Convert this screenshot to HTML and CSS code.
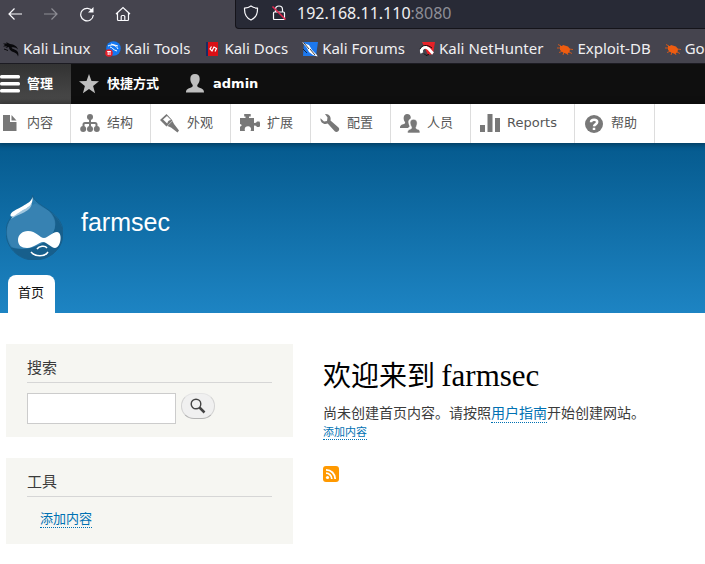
FILE: index.html
```html
<!DOCTYPE html>
<html lang="zh-CN">
<head>
<meta charset="utf-8">
<title>欢迎来到 farmsec</title>
<link rel="stylesheet" href="styles.css">
</head>
<body>
<div class="browser">
  <div class="nav">
    <button class="nav-btn" aria-label="Back"><svg viewBox="0 0 16 16"><path d="M15 8H2M7.500 2.500 2 8l5.500 5.500"/></svg></button>
    <button class="nav-btn off" aria-label="Forward"><svg viewBox="0 0 16 16"><path d="M1 8h13M8.500 2.500 14 8l-5.500 5.500"/></svg></button>
    <button class="nav-btn" aria-label="Reload"><svg viewBox="0 0 16 16"><path d="M13.500 5.500A6.300 6.300 0 1 0 14.300 9"/><path d="M14.500 1v5.500H9z" fill="#fbfbfe" stroke="none"/></svg></button>
    <button class="nav-btn" aria-label="Home"><svg viewBox="0 0 16 16"><path d="M1 8 8 1.500 15 8M2.500 7v6.500q0 1 1 1h9q1 0 1-1V7M6.200 14.500v-4q0-1 1-1h1.600q1 0 1 1v4"/></svg></button>
    <div class="url">
      <svg viewBox="0 0 16 16"><path d="M8 1c2 1.500 4 2 6.500 2.200C14.700 9 12.500 13 8 15 3.500 13 1.300 9 1.500 3.200 4 3 6 2.500 8 1z"/></svg>
      <svg viewBox="0 0 16 16"><path d="M4.500 7V4.500a3.500 3.500 0 0 1 7 0V7M3.500 7h9q1 0 1 1v5.500q0 1-1 1h-9q-1 0-1-1V8q0-1 1-1z"/><path d="m1.500 1.500 13 13" stroke="#e22850" stroke-width="1.600"/></svg>
      <span class="address">192.168.11.110<span class="port">:8080</span></span>
    </div>
  </div>
  <nav class="bookmarks">
    <a href="#"><svg viewBox="0 0 16 16"><path d="M0 2.500h4L3 1l4 2c4 .5 7 2 8 5.500-2-2-4-2.500-6.500-2 1 2 5 1.500 6.500 5 .5 1.500.5 3 0 4-.5-2.500-2-3.500-4-4.300-3-1-5-2.200-5-5.200L2.500 7 4 5.200 0 5.500l2-1.500z" fill="#08080b"/><path d="m1 8 4 1.500" stroke="#08080b"/></svg>Kali Linux</a>
    <a href="#"><svg viewBox="0 0 16 16"><circle cx="8.500" cy="7.500" r="7.300" fill="#1478f0"/><path d="M3 5c4-2 8-1 10 3M6 3l7 2M5 6c2 0 3 3 7 4" stroke="#fff" fill="none"/><circle cx="4" cy="12" r="3.800" fill="#e5202c"/><path d="M2.200 10.500h3.600M3.200 10.500v3.500M5 10.500v3.500" stroke="#fff" fill="none"/></svg>Kali Tools</a>
    <a href="#"><svg viewBox="0 0 16 16"><path d="M2 1h2v14H2z" fill="#172c65"/><path d="M4 1h10v14H4z" fill="#da1016"/><path d="M7.500 5.500 6 8l2 2 2-4 2.500 1.500-1.500 3" stroke="#fff" fill="none" stroke-width="1.200"/></svg>Kali Docs</a>
    <a href="#"><svg viewBox="0 0 16 16"><path d="M2 1h14l-2 14H1z" fill="#1d78ed"/><path d="m0 1 4 2 3 1 3 5 5 5 .5 1.500L11 14l-4-3-2-4z" fill="#fff"/><path d="m2 2 5 6M8 8l5 6M1 8l4 4" stroke="#111" stroke-width=".8" fill="none"/></svg>Kali Forums</a>
    <a href="#"><svg viewBox="0 0 16 16"><path d="M3 1h13l-2 12-5 1z" fill="#e62127"/><path d="M3 12c-2-4 2-7 5.500-5 2.500 1.500 3.500 4 5.500 5.500" stroke="#fff" stroke-width="3" fill="none"/><path d="M1 8c2-4 7-5 12-1M5 12.500l2 2 3-1" stroke="#111" fill="none"/></svg>Kali NetHunter</a>
    <a href="#"><svg viewBox="0 0 16 16"><path d="M3 5h2l1-1 5 1.500 2 2.500-.5 3-2.500 2-4-1.500L3 9z" fill="#ee5c10"/><path d="M1 3.500 4 5M0 7h4M2 11.500 6 10M6 14l1-3M12 8l4 .5M12 11l3 1.500M10 12l1 2" stroke="#ee5c10" stroke-width=".8"/></svg>Exploit-DB</a>
    <a href="#"><svg viewBox="0 0 16 16"><path d="M3 5h2l1-1 5 1.500 2 2.500-.5 3-2.500 2-4-1.500L3 9z" fill="#ee5c10"/><path d="M1 3.500 4 5M0 7h4M2 11.500 6 10M6 14l1-3M12 8l4 .5M12 11l3 1.500M10 12l1 2" stroke="#ee5c10" stroke-width=".8"/></svg>Goo</a>
  </nav>
</div>

<nav class="admin-bar">
  <a class="active" href="#"><svg viewBox="0 0 20 20"><rect y="1" width="20" height="3.600" rx="1.500"/><rect y="8" width="20" height="3.600" rx="1.500"/><rect y="15" width="20" height="3.600" rx="1.500"/></svg>管理</a>
  <a href="#"><svg viewBox="0 0 20 20"><path d="m10 0 2.500 7 7.500.3-5.900 4.600 2 7.300L10 15.100l-6.100 4.100 2-7.300L0 7.300 7.500 7z"/></svg>快捷方式</a>
  <a href="#"><svg viewBox="0 0 20 20"><path d="M10 0c3 0 4.800 1.800 4.700 5-.1 2.800-1.300 4.500-2.200 5.800-.7 1.400-.2 2 1.500 2.700 3 1.200 5 1.500 5 5H1c0-3.500 2-3.800 5-5 1.700-.7 2.200-1.300 1.500-2.700C6.600 9.500 5.400 7.800 5.300 5 5.200 1.800 7 0 10 0z"/></svg>admin</a>
</nav>
<nav class="tray">
  <a href="#"><svg viewBox="0 0 20 20"><path d="M3 2h7v7h6.500v9H3z"/><path d="M11.500 2v5.500h5z"/></svg>内容</a>
  <a href="#"><svg viewBox="0 0 20 20"><path d="M3.500 15v-3.500q0-1.500 1.500-1.500h10q1.500 0 1.500 1.500V15M10 4v11" fill="none" stroke="#787878" stroke-width="2"/><circle cx="10" cy="4" r="3"/><circle cx="3.200" cy="16" r="3"/><circle cx="10" cy="16" r="3"/><circle cx="16.800" cy="16" r="3"/></svg>结构</a>
  <a href="#"><svg viewBox="0 0 20 20"><path d="M6.500 1 12.500 7.500 6.500 13.500 0 7zM7 3 3 6.500l4.200 4L8 8.500l1-1 2-.5z" fill-rule="evenodd"/><path d="m12.500 8 1.500 3 5 6.500-1.500 2-6.500-5-3.500-1.500z"/></svg>外观</a>
  <a href="#"><svg viewBox="0 0 20 20"><path d="M0 5h5.500V3.500H4.200V1h6.500v2.500H9V5h5v5l2-.2 1-1.300h2.500L20 10v3l-.7 1H17l-1-1.300-2-.2V18h-3.500c1.300-2.500.2-4.500-2.200-4.800C5.700 13 4 15 5 18H0v-4.500c2-.3 2.200-2.300 0-2.500z"/></svg>扩展</a>
  <a href="#"><svg viewBox="0 0 20 20"><path d="M5 1c4-.5 6.500 3 5.500 6.500l8 7c1.200 1.300.7 2.700-.3 3.700-1 .9-2.500 1-3.500 0l-7-7.700C4 12 0 9.500.5 5.200L4 8.500 7 8 7.500 4.500z"/></svg>配置</a>
  <a href="#"><svg viewBox="0 0 20 20"><path d="M7 1c2.500 0 4 1.500 3.800 4.200C8.500 6.800 8 8 8.500 10c.2 1.500.8 2.500 1.200 3.300L8 15H0c0-3 1.500-3.200 4-4 1.400-.6 1.400-1.200.8-2.200C3 6.500 3.200 1 7 1z"/><path d="M13.500 6.300c4 0 4.300 4 3 7-.8 1.500-.8 2.200.5 2.700 2.500.8 3 1.200 3 4H7.500c0-2.800.8-3.200 3-4 1.500-.5 1.300-1.500.6-2.700-1.600-3-1.600-7 2.400-7z" stroke="#fff" stroke-width=".6"/></svg>人员</a>
  <a href="#"><svg viewBox="0 0 20 20"><path d="M0 12h5v7H0zM7.500 1h5v18h-5zM15 5h5v14h-5z"/></svg>Reports</a>
  <a href="#"><svg viewBox="0 0 20 20"><circle cx="10" cy="11" r="9"/><path d="M7 9.200C7 5.800 13.200 6 13.200 9c0 2.300-3 2.300-3.200 4.300M10 14.800v2.200" fill="none" stroke="#fff" stroke-width="2.500"/></svg>帮助</a>
</nav>

<header class="site-header">
  <a class="brand" href="#">
    <svg class="logo" viewBox="0 0 57 65">
      <path d="M26.500 0c1 5.500 7 9 13 13C50 20 57 27 57 38c0 16-13 27-29 27S0 52 0 37C0 26 7 19 15 14.500 21 11 26 7 26.500 0z" fill="#287bae"/>
      <path d="M43 16c8 6 14 13 14 23 0 15-13 26-29 26C19 65 9 60 5 52c12 5 28 0 38-9 8-8 8-18 0-27z" fill="#175f8c"/>
      <path d="M43 16c8 7 9 17 0 27-10 10-25 13-37 9C-4 37 2 22 15 14.500l15-6z" fill="#3f86b4" opacity=".65"/>
      <path d="M26.500 0c1 5.500 7 9 13 13C50 20 57 27 57 38c0 16-13 27-29 27S0 52 0 37C0 26 7 19 15 14.500 21 11 26 7 26.500 0z" fill="none" stroke="#175f8c"/>
      <path d="M5 24c4-8 16-8 21-16-1 9-12 10-21 16z" fill="#9fc6df"/>
      <path d="M26.500 2c1 8-5 11-11 14C10 19 7 23 4.500 21 4 16 11 15 17 11c4-2.500 8-4 9.500-9z" fill="#fff"/>
      <path d="M22 36c8 0 12 7 16 7 4 0 8-6 13-6 6 0 4 16-2 16-4 0-8-6-12-6-4 0-9 6-16 6-6 0-9-3-9-8s4-9 10-9z" fill="#fff"/>
      <path d="M31 54c2-3 8-4 10-1M25 57c4 5 14 5 17 0" fill="none" stroke="#fff" stroke-width="1.500"/>
    </svg>
    <span class="site-name">farmsec</span>
  </a>
  <nav class="tabs"><a href="#">首页</a></nav>
</header>

<div class="layout">
  <aside class="sidebar">
    <section class="block">
      <h2><label for="q">搜索</label></h2>
      <form class="search">
        <input id="q" type="search">
        <button type="button" aria-label="搜索"><svg viewBox="0 0 16 16"><circle cx="6" cy="6" r="4.800" fill="none" stroke="#444" stroke-width="1.400"/><path d="m9.500 9.500 5 5" stroke="#444" stroke-width="2.500"/></svg></button>
      </form>
    </section>
    <section class="block">
      <h2>工具</h2>
      <ul><li><a class="link" href="#">添加内容</a></li></ul>
    </section>
  </aside>
  <main>
    <h1>欢迎来到 <span>farmsec</span></h1>
    <p>尚未创建首页内容。请按照<a class="link" href="#">用户指南</a>开始创建网站。</p>
    <div class="add"><a class="link" href="#">添加内容</a></div>
    <a class="feed" href="#" aria-label="RSS"><svg viewBox="0 0 16 16"><rect width="16" height="16" rx="3" fill="#ff9900"/><circle cx="4.500" cy="11.500" r="1.600" fill="#fff"/><path d="M3 7.200A5.800 5.800 0 0 1 8.800 13M3 3.800A9.200 9.200 0 0 1 12.200 13" fill="none" stroke="#fff" stroke-width="1.800"/></svg></a>
  </main>
</div>
</body>
</html>
```
FILE: styles.css
```css
* { box-sizing: border-box; }
body {
  margin: 0;
  background: #fff;
  color: #3b3b3b;
  font: 14px/22px "Noto Sans CJK SC", sans-serif;
  overflow-x: hidden;
}
a { color: inherit; text-decoration: none; }
svg { display: block; flex: none; }
h1, h2, p, ul { margin: 0; padding: 0; font-weight: 400; }
li { list-style: none; }

.browser {
  background: #45444e;
  border-bottom: 1px solid #1c1b22;
  color: #f0f0f2;
  font-family: "Noto Sans", sans-serif;
  overflow: hidden;
}
.nav { display: flex; align-items: flex-start; gap: 20px; padding-left: 7px; }
.nav-btn { padding: 6px 0; border: 0; background: none; }
.nav-btn.off { opacity: .4; }
.nav svg { width: 16px; height: 16px; fill: none; stroke: #fbfbfe; stroke-width: 1.2; }
.url {
  flex: 1;
  display: flex;
  align-items: center;
  gap: 12px;
  height: 29px;
  margin-left: 84px;
  padding: 0 7px 2px;
  background: #282a36;
  border: solid #15141a;
  border-width: 0 0 1px 1px;
  border-radius: 0 0 0 4px;
  font-size: 16px;
}
.address { margin-left: -2px; }
.port { color: #8e8e96; }
.bookmarks { display: flex; gap: 14px; padding: 8px 0 3px 3px; font-size: 15px; line-height: 23px; white-space: nowrap; }
.bookmarks a { display: flex; align-items: center; gap: 4px; }
.bookmarks svg { width: 16px; height: 16px; }

.admin-bar, .tray { display: flex; font-family: "DejaVu Sans", "Noto Sans CJK SC", sans-serif; font-size: 13px; white-space: nowrap; }
.admin-bar { height: 40px; background: #0f0f0f; color: #fff; font-weight: 700; }
.admin-bar a, .tray a { display: flex; align-items: center; gap: 8px; padding: 0 18px 0 8px; }
.admin-bar a:first-child, .tray a:first-child { gap: 7px; padding-left: 0; }
.admin-bar svg, .tray svg { width: 20px; height: 20px; }
.admin-bar svg { fill: #bebebe; }
.admin-bar .active svg { fill: #fff; }
.admin-bar .active { background: linear-gradient(#333, #4a4a4a); }
.tray {
  position: relative;
  height: 39px;
  background: #fff;
  color: #565656;
  box-shadow: 0 0 5px 2px rgba(0, 0, 0, .33);
}
.tray a { gap: 7px; padding: 0 17px 2px 9px; border-right: 1px solid #ddd; }
.tray svg { fill: #787878; }

.site-header { padding: 52px 6px 0; background: linear-gradient(#055a8e, #1d84c3); }
.brand { display: flex; gap: 18px; color: #fff; }
.logo { width: 57px; height: 65px; }
.site-name { padding-top: 12px; font: 25px/30px "Liberation Sans", sans-serif; }
.tabs { display: flex; padding: 15px 2px 0; }
.tabs a { padding: 5px 11px 9px 10px; border-radius: 8px 8px 0 0; background: #fff; color: #111; font-size: 13px; line-height: 24px; }

.layout { display: grid; grid-template-columns: minmax(0, 287px) minmax(0, 1fr); gap: 30px; padding: 31px 6px 18px; }
.sidebar { display: grid; gap: 21px; align-content: start; }
.block { padding: 10px 21px 13px; background: #f6f6f2; }
.block h2 { margin-bottom: 10px; padding-bottom: 2px; border-bottom: 1px solid #d6d6d6; font-size: 15px; line-height: 26px; }
.search { display: flex; align-items: flex-start; gap: 5px; }
.search input { width: 149px; height: 31px; min-width: 0; padding: 4px; border: 1px solid #ccc; background: #fff; font-size: 14px; appearance: none; }
.search button { display: grid; place-items: center; width: 34px; height: 26px; padding: 0; border: 1px solid #ccc; border-color: #e4e4e4 #d2d2d2 #b4b4b4; border-radius: 13px; background: #f0f0f0; }
.search button svg { width: 16px; height: 16px; }
.block ul { padding: 0 0 2px 13px; font-size: 13px; line-height: 22px; }
.link { color: #0071b3; border-bottom: 1px dotted; }

main { padding-top: 9px; }
h1 { margin-bottom: 6px; color: #000; font-size: 28px; line-height: 42px; }
h1 span { font-family: "Liberation Serif", serif; font-size: 31px; line-height: 31px; }
.add { font-size: 11px; line-height: 16px; }
.feed { display: block; width: 16px; margin-top: 27px; }
```
